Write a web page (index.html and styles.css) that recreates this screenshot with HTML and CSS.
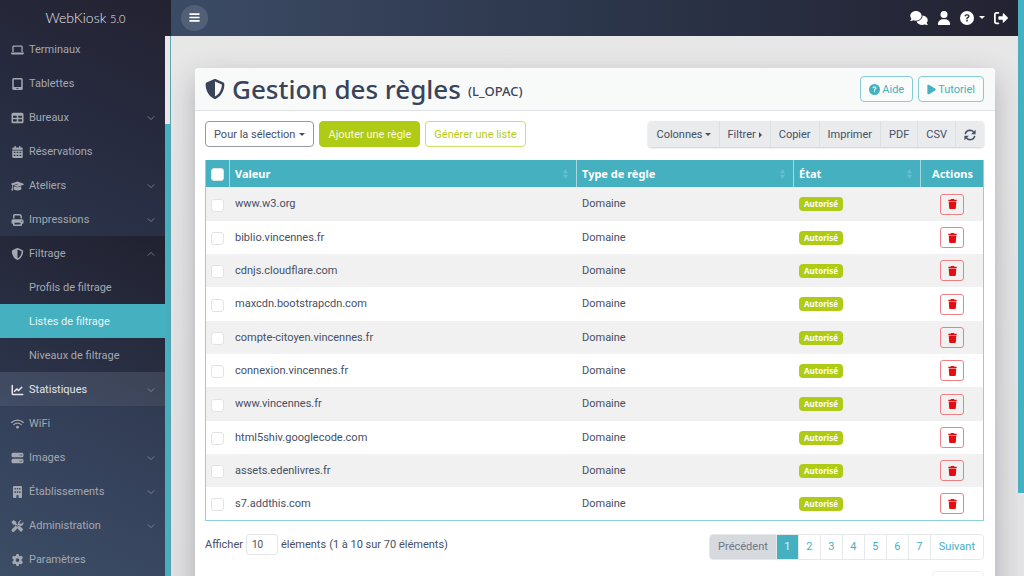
FILE: index.html
```html
<!DOCTYPE html>
<html lang="fr">
<head>
<meta charset="utf-8">
<title>WebKiosk - Gestion des règles</title>
<link rel="stylesheet" href="styles.css">
</head>
<body>
<svg class="sprite" aria-hidden="true">
  <symbol id="laptop" viewBox="0 0 640 512"><path d="M128 32C92.700 32 64 60.700 64 96V352h64V96H512V352h64V96c0-35.300-28.700-64-64-64H128zM19.200 384C8.600 384 0 392.600 0 403.200C0 445.600 34.400 480 76.800 480H563.200c42.400 0 76.800-34.400 76.800-76.800c0-10.600-8.600-19.200-19.200-19.200H19.200z"/></symbol>
  <symbol id="tablet" viewBox="0 0 512 512"><path fill-rule="evenodd" d="M96 0h320q64 0 64 64v384q0 64-64 64H96q-64 0-64-64V64Q32 0 96 0zM96 64v320h320V64zM208 432v32h96v-32z"/></symbol>
  <symbol id="table" viewBox="0 0 512 512"><path fill-rule="evenodd" d="M64 32H448q64 0 64 64V416q0 64-64 64H64q-64 0-64-64V96Q0 32 64 32zM64 160v80H224v-80zM288 160v80H448v-80zM64 304v96H224v-96zM288 304v96H448v-96z"/></symbol>
  <symbol id="calendar" viewBox="0 0 512 512"><path fill-rule="evenodd" d="M128 0h56v64h144V0h56v64h48q48 0 48 48v48H32v-48q0-48 48-48h48zM32 192H480V464q0 48-48 48H80q-48 0-48-48zM96 240v56h72v-56zM220 240v56h72v-56zM344 240v56h72v-56zM96 368v56h72v-56zM220 368v56h72v-56zM344 368v56h72v-56z"/></symbol>
  <symbol id="cap" viewBox="0 0 640 512"><path d="M320 32 24 134q-24 10-24 26t24 26l50 18q-26 36-26 84v28c0 60-20 110-40 138q-6 10 4 14l72 18q10 0 12-8c10-60 8-118-8-156v-34q0-38 26-64l206-82q14-4 18 10t-8 20L146 244l150 52q24 8 48 0l272-98q24-8 24-24t-24-24zM128 408c0 40 86 72 192 72s192-32 192-72L497 263 354 315q-34 12-68 0L143 263z"/></symbol>
  <symbol id="print" viewBox="0 0 512 512"><path fill-rule="evenodd" d="M64 64q0-64 64-64H353q20 0 35 14l46 46q14 14 14 36v96h-64V96l-32-32H128v128H64zM64 224h384q64 0 64 64v96q0 32-32 32h-32v64q0 32-32 32H96q-32 0-32-32v-64H32q-32 0-32-32v-96q0-64 64-64zM128 368v80h256v-80zM432 272a24 24 0 1 0 0 48 24 24 0 0 0 0-48z"/></symbol>
  <symbol id="shield" viewBox="0 0 512 512"><path fill-rule="evenodd" d="M256 0q7 0 13 3L458 83c22 9 38 31 38 57 0 99-42 280-214 363q-26 12-52 0C58 420 16 239 16 140c0-26 16-48 38-57L243 3q6-3 13-3zM256 67V445C394 378 431 230 432 141z"/></symbol>
  <symbol id="chart" viewBox="0 0 512 512"><path d="M32 64v336q0 48 48 48h400M128 310l96-100 80 72L436 142" fill="none" stroke="currentColor" stroke-width="64" stroke-linecap="round" stroke-linejoin="round"/></symbol>
  <symbol id="wifi" viewBox="0 0 640 512"><g fill="none" stroke="currentColor" stroke-width="60" stroke-linecap="round"><path d="M32 180q124-116 288-116t288 116M134 288q82-72 186-72t186 72"/></g><circle cx="320" cy="410" r="66"/></symbol>
  <symbol id="server" viewBox="0 0 512 512"><path fill-rule="evenodd" d="M64 32H448q64 0 64 64v64q0 64-64 64H64q-64 0-64-64V96Q0 32 64 32zM344 104v48h48v-48zM416 104v48h48v-48zM64 288H448q64 0 64 64v64q0 64-64 64H64q-64 0-64-64v-64q0-64 64-64zM344 360v48h48v-48zM416 360v48h48v-48z"/></symbol>
  <symbol id="building" viewBox="0 0 512 512"><path fill-rule="evenodd" d="M112 0H400q48 0 48 48V464q0 48-48 48H304V432q0-48-48-48t-48 48v80H112q-48 0-48-48V48Q64 0 112 0zM128 80v72h56V80zM228 80v72h56V80zM328 80v72h56V80zM128 224v72h56v-72zM228 224v72h56v-72zM328 224v72h56v-72z"/></symbol>
  <symbol id="tools" viewBox="0 0 512 512"><path d="M79 7 7 79q-10 12 0 24l64 92q5 8 17 8h54l110 109q-14 34 14 61l116 118q22 20 44 0l60-60q20-22 0-44L368 271q-27-27-61-14L203 148V90q0-14-10-20L101 7q-12-8-22 0zM20 396 203 213l66 66c-24 18-32 50-24 80L120 492q-50 38-94-6-44-46-6-90zM509 114q7 20-3 48c-32 90-98 100-138 90l-42-32q-34-18-54-4c-12-90 28-176 110-206q22-12 44 0l-78 78v58q0 16 16 16h58l78-78q6 16 9 30z"/></symbol>
  <symbol id="gear" viewBox="0 0 512 512"><path fill-rule="evenodd" d="m202 18q2-18 20-18h68q18 0 20 18l12 60 38 22 58-20q18-6 26 10l36 62q8 16-6 28l-46 40q4 36 0 72l46 40q14 12 6 28l-36 62q-8 16-26 10l-58-20-38 22-12 60q-2 18-20 18h-68q-18 0-20-18l-12-60-38-22-58 20q-18 6-26-10l-36-62q-8-16 6-28l46-40q-4-36 0-72l-46-40q-14-12-6-28l36-62q8-16 26-10l58 20 38-22zM256 176a80 80 0 1 0 0 160 80 80 0 0 0 0-160z"/></symbol>
  <symbol id="bars" viewBox="0 0 512 512"><path d="M48 96h416M48 256h416M48 416h416" stroke="currentColor" stroke-width="76" stroke-linecap="round"/></symbol>
  <symbol id="comments" viewBox="0 0 640 512"><path d="M208 352c115 0 208-79 208-176S323 0 208 0 0 79 0 176c0 39 15 74 40 103-4 30-20 48-35 62-9 13-4 27 10 27 42 0 74-14 98-32q44 16 95 16zM448 176c0 112-99 194-219 207 32 75 114 129 211 129q46 0 87-17c28 12 64 17 98 17 16-2 18-15 10-26-15-14-31-32-35-56 25-30 40-66 40-104 0-84-83-158-193-166z"/></symbol>
  <symbol id="user" viewBox="0 0 512 512"><circle cx="256" cy="128" r="128"/><path d="M210 304h92c98 0 178 80 178 178q0 30-30 30H62q-30 0-30-30c0-98 80-178 178-178z"/></symbol>
  <symbol id="help" viewBox="0 0 512 512"><circle cx="256" cy="256" r="256"/><g class="mark"><path d="M190 178q4-36 44-36h40q48 2 50 46 0 28-28 44l-40 26v28" fill="none" stroke="currentColor" stroke-width="48" stroke-linecap="round"/><circle cx="256" cy="352" r="32"/></g></symbol>
  <symbol id="exit" viewBox="0 0 512 512"><path d="M160 64H96q-64 0-64 64v256q0 64 64 64h64" fill="none" stroke="currentColor" stroke-width="64" stroke-linecap="round"/><path d="M320 96v96H192q-32 0-32 32v64q0 32 32 32h128v96q4 22 26 14l158-156q16-18 0-36L346 82q-22-8-26 14z"/></symbol>
  <symbol id="sync" viewBox="0 0 512 512"><path d="M54 222Q84 66 250 58q98 0 160 74M458 290Q428 446 262 454q-98 0-160-74" fill="none" stroke="currentColor" stroke-width="64"/><path d="M496 30v178q0 16-16 16H304zM16 482V304q0-16 16-16h176z"/></symbol>
  <symbol id="trash" viewBox="0 0 448 512"><path d="M135 18 128 32H32Q0 32 0 64t32 32h384q32 0 32-32t-32-32h-96l-7-14Q304 0 284 0H164q-20 0-29 18zM32 128l21 339q3 45 48 45h246q45 0 48-45l21-339z"/></symbol>
  <symbol id="play" viewBox="0 0 384 512"><path d="M72 39Q48 25 24 38T0 80v352q0 28 24 42t49-1l288-176q23-14 23-41t-23-41z"/></symbol>
  <symbol id="down" viewBox="0 0 10 10"><path d="M1 3l4 4 4-4" fill="none" stroke="currentColor"/></symbol>
  <symbol id="up" viewBox="0 0 10 10"><path d="M1 7l4-4 4 4" fill="none" stroke="currentColor"/></symbol>
  <symbol id="sort" viewBox="0 0 6 12"><path d="M0 5l3-5 3 5zM0 7l3 5 3-5z"/></symbol>
</svg>

<div class="app">
  <aside class="sidebar">
    <div class="brand">WebKiosk <small>5.0</small></div>
    <nav class="menu">
      <a href="#"><svg><use href="#laptop"/></svg><span>Terminaux</span></a>
      <a href="#"><svg><use href="#tablet"/></svg><span>Tablettes</span></a>
      <a href="#"><svg><use href="#table"/></svg><span>Bureaux</span><svg class="chevron"><use href="#down"/></svg></a>
      <a href="#"><svg><use href="#calendar"/></svg><span>Réservations</span></a>
      <a href="#"><svg><use href="#cap"/></svg><span>Ateliers</span><svg class="chevron"><use href="#down"/></svg></a>
      <a href="#"><svg><use href="#print"/></svg><span>Impressions</span><svg class="chevron"><use href="#down"/></svg></a>
      <div class="submenu">
        <a href="#"><svg><use href="#shield"/></svg><span>Filtrage</span><svg class="chevron"><use href="#up"/></svg></a>
        <a class="child" href="#">Profils de filtrage</a>
        <a class="child current" href="#">Listes de filtrage</a>
        <a class="child" href="#">Niveaux de filtrage</a>
      </div>
      <a class="hover" href="#"><svg><use href="#chart"/></svg><span>Statistiques</span><svg class="chevron"><use href="#down"/></svg></a>
      <a href="#"><svg><use href="#wifi"/></svg><span>WiFi</span></a>
      <a href="#"><svg><use href="#server"/></svg><span>Images</span><svg class="chevron"><use href="#down"/></svg></a>
      <a href="#"><svg><use href="#building"/></svg><span>Établissements</span><svg class="chevron"><use href="#down"/></svg></a>
      <a href="#"><svg><use href="#tools"/></svg><span>Administration</span><svg class="chevron"><use href="#down"/></svg></a>
      <a href="#"><svg><use href="#gear"/></svg><span>Paramètres</span></a>
    </nav>
    <div class="menu-scroll"></div>
  </aside>

  <div class="page">
    <header class="topbar">
      <button class="burger" aria-label="Menu"><svg><use href="#bars"/></svg></button>
      <div class="top-icons">
        <a href="#" aria-label="Messages"><svg class="wide"><use href="#comments"/></svg></a>
        <a href="#" aria-label="Compte"><svg><use href="#user"/></svg></a>
        <a href="#" aria-label="Aide" class="help"><svg><use href="#help"/></svg><i class="caret"></i></a>
        <a href="#" aria-label="Déconnexion"><svg><use href="#exit"/></svg></a>
      </div>
    </header>
    <main>
      <section class="card">
        <div class="card-head">
          <h1><svg><use href="#shield"/></svg><span>Gestion des règles</span><small>(L_OPAC)</small></h1>
          <div class="group">
            <button class="btn teal"><svg class="help-icon"><use href="#help"/></svg>Aide</button>
            <button class="btn teal"><svg class="play"><use href="#play"/></svg>Tutoriel</button>
          </div>
        </div>
        <div class="card-body">
          <div class="toolbar">
            <div class="group">
              <button class="btn dark">Pour la sélection <i class="caret"></i></button>
              <button class="btn lime-fill">Ajouter une règle</button>
              <button class="btn lime">Générer une liste</button>
            </div>
            <div class="btn-bar">
              <button>Colonnes<i class="caret"></i></button>
              <button>Filtrer<i class="caret right"></i></button>
              <button>Copier</button>
              <button>Imprimer</button>
              <button>PDF</button>
              <button>CSV</button>
              <button aria-label="Actualiser"><svg><use href="#sync"/></svg></button>
            </div>
          </div>
          <table>
            <colgroup><col class="c-check"><col><col class="c-type"><col class="c-state"><col class="c-actions"></colgroup>
            <thead><tr>
              <th><input type="checkbox" aria-label="Tout sélectionner"></th>
              <th><div class="th">Valeur<svg><use href="#sort"/></svg></div></th>
              <th><div class="th">Type de règle<svg><use href="#sort"/></svg></div></th>
              <th><div class="th">État<svg><use href="#sort"/></svg></div></th>
              <th class="center">Actions</th>
            </tr></thead>
            <tbody>
              <tr><td><input type="checkbox" aria-label="www.w3.org"></td><td>www.w3.org</td><td>Domaine</td><td><span class="badge">Autorisé</span></td><td class="center"><button class="del" aria-label="Supprimer"><svg><use href="#trash"/></svg></button></td></tr>
              <tr><td><input type="checkbox" aria-label="biblio.vincennes.fr"></td><td>biblio.vincennes.fr</td><td>Domaine</td><td><span class="badge">Autorisé</span></td><td class="center"><button class="del" aria-label="Supprimer"><svg><use href="#trash"/></svg></button></td></tr>
              <tr><td><input type="checkbox" aria-label="cdnjs.cloudflare.com"></td><td>cdnjs.cloudflare.com</td><td>Domaine</td><td><span class="badge">Autorisé</span></td><td class="center"><button class="del" aria-label="Supprimer"><svg><use href="#trash"/></svg></button></td></tr>
              <tr><td><input type="checkbox" aria-label="maxcdn.bootstrapcdn.com"></td><td>maxcdn.bootstrapcdn.com</td><td>Domaine</td><td><span class="badge">Autorisé</span></td><td class="center"><button class="del" aria-label="Supprimer"><svg><use href="#trash"/></svg></button></td></tr>
              <tr><td><input type="checkbox" aria-label="compte-citoyen.vincennes.fr"></td><td>compte-citoyen.vincennes.fr</td><td>Domaine</td><td><span class="badge">Autorisé</span></td><td class="center"><button class="del" aria-label="Supprimer"><svg><use href="#trash"/></svg></button></td></tr>
              <tr><td><input type="checkbox" aria-label="connexion.vincennes.fr"></td><td>connexion.vincennes.fr</td><td>Domaine</td><td><span class="badge">Autorisé</span></td><td class="center"><button class="del" aria-label="Supprimer"><svg><use href="#trash"/></svg></button></td></tr>
              <tr><td><input type="checkbox" aria-label="www.vincennes.fr"></td><td>www.vincennes.fr</td><td>Domaine</td><td><span class="badge">Autorisé</span></td><td class="center"><button class="del" aria-label="Supprimer"><svg><use href="#trash"/></svg></button></td></tr>
              <tr><td><input type="checkbox" aria-label="html5shiv.googlecode.com"></td><td>html5shiv.googlecode.com</td><td>Domaine</td><td><span class="badge">Autorisé</span></td><td class="center"><button class="del" aria-label="Supprimer"><svg><use href="#trash"/></svg></button></td></tr>
              <tr><td><input type="checkbox" aria-label="assets.edenlivres.fr"></td><td>assets.edenlivres.fr</td><td>Domaine</td><td><span class="badge">Autorisé</span></td><td class="center"><button class="del" aria-label="Supprimer"><svg><use href="#trash"/></svg></button></td></tr>
              <tr><td><input type="checkbox" aria-label="s7.addthis.com"></td><td>s7.addthis.com</td><td>Domaine</td><td><span class="badge">Autorisé</span></td><td class="center"><button class="del" aria-label="Supprimer"><svg><use href="#trash"/></svg></button></td></tr>
            </tbody>
          </table>
          <div class="table-foot">
            <div class="length"><label for="length">Afficher</label><select id="length"><option>10</option></select><span>éléments</span><span>(1 à 10 sur 70 éléments)</span></div>
            <nav class="pager" aria-label="Pagination">
              <a class="off" href="#">Précédent</a><a class="num on" href="#">1</a><a class="num" href="#">2</a><a class="num" href="#">3</a><a class="num" href="#">4</a><a class="num" href="#">5</a><a class="num" href="#">6</a><a class="num" href="#">7</a><a href="#">Suivant</a>
            </nav>
          </div>
          <div class="bottom"><button class="btn back" aria-label="Retour"></button></div>
        </div>
      </section>
    </main>
  </div>
  <div class="page-scroll"></div>
</div>
</body>
</html>
```
FILE: styles.css
```css
* { box-sizing: border-box; }
body {
  margin: 0;
  height: 100vh;
  overflow: hidden;
  font: 11px/16px Roboto, "Noto Sans", sans-serif;
  color: #465064;
}
a { color: inherit; text-decoration: none; }
button, select { font: inherit; color: inherit; }
svg { fill: currentColor; width: 12px; height: 12px; flex: none; }
.sprite { position: absolute; width: 0; height: 0; }
.mark { color: var(--mark, #272b40); fill: var(--mark, #272b40); }

.app { display: flex; height: 100vh; }

/* Sidebar */
.sidebar {
  flex: none;
  width: 171px;
  display: grid;
  grid-template: 36px 1fr / 1fr 6px;
  background: linear-gradient(25deg, #3c4d66 0%, #35415a 25%, #2c364b 50%, #272b40 75%, #232231 100%);
}
.brand {
  grid-column: 1 / 3;
  text-align: center;
  color: #e3e5ea;
  font: 300 14px/36px Lato, sans-serif;
}
.brand small { font-size: 11px; }
.menu { margin-top: -4px; color: #a4a8b1; }
.menu a { display: flex; align-items: center; height: 34px; padding: 1px 10px 0 11px; }
.menu a > svg:first-child { width: 13px; height: 12px; }
.menu a > span { margin-left: 5px; flex: 1; }
.menu .chevron { width: 8px; height: 8px; color: #8b909c; }
.submenu { background: linear-gradient(25deg, #2c344a, #212130); }
.menu .child { padding-left: 29px; }
.menu .current { background: #45b0bf; color: #e6f5f7; }
.menu .hover { background: linear-gradient(25deg, #414d66, #3c4355); color: #e3e5ea; }
.menu-scroll { border-right: 1px solid #5ba4b0; background: linear-gradient(#e9e8ea 88px, #45b0bf 88px); }

/* Page */
.page { flex: 1; min-width: 0; background: #e1e0e2; }
.page-scroll { flex: none; width: 6px; background: linear-gradient(#45b0bf 493px, #e3e2e4 493px); }
.topbar {
  height: 36px;
  display: flex;
  justify-content: space-between;
  align-items: center;
  padding: 0 10px 1px;
  background: linear-gradient(90deg, #3c4b65, #2c364b 50%, #232231);
  color: #fff;
}
.burger {
  display: grid;
  place-items: center;
  width: 27px;
  height: 26px;
  padding: 0;
  border: 0;
  border-radius: 50%;
  background: #526077;
  color: #fff;
}
.topbar .burger svg { width: 11px; height: 11px; }
.top-icons { display: flex; gap: 9px; }
.top-icons a { display: flex; align-items: center; gap: 5px; }
.top-icons svg { width: 14px; height: 14px; }
.top-icons .wide { width: 18px; }
.caret { border: 3px solid transparent; border-top-color: currentColor; border-bottom: 0; }
.caret.right { border: 3px solid transparent; border-left-color: currentColor; border-right: 0; }

main { padding: 32px 23px 0 24px; background: linear-gradient(#e8e7e8, #e2e1e3); }
.card {
  border-radius: 4px;
  background: #fff;
  box-shadow: 0 10px 28px rgba(60, 60, 70, .32);
}
.card-head {
  display: flex;
  justify-content: space-between;
  align-items: center;
  height: 43px;
  padding: 0 11px 0 10px;
  border-bottom: 1px solid #dfe1e4;
  border-radius: 4px 4px 0 0;
  background: #f8faf9;
}
h1 {
  display: flex;
  align-items: center;
  gap: 7px;
  margin: 0;
  font: 500 26px/40px "Noto Sans", sans-serif;
  color: #39445a;
}
h1 svg { width: 20px; height: 20px; }
h1 small { font-size: 13px; padding-top: 4px; }
.group { display: flex; gap: 5px; }
.btn {
  display: flex;
  align-items: center;
  gap: 4px;
  height: 26px;
  padding: 1px 8px 0;
  border: 1px solid;
  border-radius: 4px;
  background: #fff;
  white-space: nowrap;
}
.btn.teal { --mark: #fff; color: #45b0bf; border-color: #86cbd5; gap: 2px; background: #fafcfb; }
.btn .help-icon { width: 11px; height: 11px; }
.btn .play { width: 9px; height: 11px; }
.btn.dark { border-color: #9399a7; gap: 4px; }
.btn.lime { color: #b4cc19; border-color: #cfde6c; }
.btn.lime-fill { color: #f7fadf; background: #b0cb15; border-color: #b0cb15; }

.card-body { padding: 10px 11px 10px 10px; }
.toolbar { display: flex; justify-content: space-between; margin-bottom: 13px; }
.btn-bar { display: flex; border-radius: 4px; overflow: hidden; box-shadow: 0 1px 2px rgba(50, 60, 80, .25); }
.btn-bar button {
  display: flex;
  align-items: center;
  gap: 2px;
  height: 26px;
  padding: 1px 8px 0;
  border: 0;
  border-left: 1px solid #dddfe3;
  background: #e9ebed;
}
.btn-bar button:first-child { border-left: 0; }
.btn-bar .right { margin-left: 1px; }

/* Rules table */
table {
  width: 100%;
  table-layout: fixed;
  border-collapse: separate;
  border-spacing: 0;
  border: 1px solid #8fd0d8;
  border-top: 0;
}
.c-check { width: 23px; }
.c-type { width: 217px; }
.c-state { width: 127px; }
.c-actions { width: 63px; }
th, td { padding: 0 5px; text-align: left; white-space: nowrap; }
th { height: 27px; background: #45b0bf; color: #fff; font-family: "Noto Sans", sans-serif; font-weight: 700; }
th + th { border-left: 1px solid #a5d9e0; }
th:first-child, td:first-child { padding-right: 0; }
td { height: 33px; }
td + td { padding-left: 6px; }
tr:nth-child(3n + 1) td { height: 34px; }
tr:last-child td { height: 33px; }
tbody tr:nth-child(odd) { background: #f1f1f1; }
th.center, td.center { padding: 0 0 0 1px; text-align: center; }
.th { display: flex; justify-content: space-between; align-items: center; }
.th svg { width: 5px; height: 10px; margin-right: 3px; color: #66bfcb; }
input[type="checkbox"] {
  appearance: none;
  display: block;
  width: 13px;
  height: 13px;
  margin: 2px 0 0;
  border: 1px solid #e1e3e5;
  border-radius: 3px;
  background: #fff;
}
.badge {
  display: inline-block;
  padding: 0 5px;
  border-radius: 4px;
  background: #b0cb15;
  color: #fff;
  font: 700 8px/14px "Noto Sans", sans-serif;
  vertical-align: middle;
}
.del {
  display: inline-grid;
  place-items: center;
  width: 24px;
  height: 21px;
  padding: 0;
  border: 1px solid #ef7f84;
  border-radius: 3px;
  background: transparent;
  color: #e60d12;
  vertical-align: middle;
}
.del svg { width: 9px; height: 10px; }

.table-foot { display: flex; justify-content: space-between; margin-top: 13px; }
.length { display: flex; align-items: center; gap: 3px; height: 21px; }
.length select {
  appearance: none;
  width: 32px;
  height: 21px;
  padding: 0 5px;
  border: 1px solid #e3e5e8;
  border-radius: 3px;
  background: #fff;
  font-size: 10px;
}
.pager { display: flex; border: 1px solid #e6e8ea; border-radius: 4px; overflow: hidden; color: #45b0bf; }
.pager a { padding: 0 8px; line-height: 24px; border-left: 1px solid #e6e8ea; }
.pager .num { width: 22px; padding: 0; text-align: center; }
.pager .off { background: #d6dadf; color: #6d7685; border-left: 0; }
.pager .on { background: #45b0bf; color: #d9f0f3; }
.bottom { display: flex; justify-content: flex-end; margin-top: 11px; }
.back { width: 52px; border-color: #eeeff1; }
```
